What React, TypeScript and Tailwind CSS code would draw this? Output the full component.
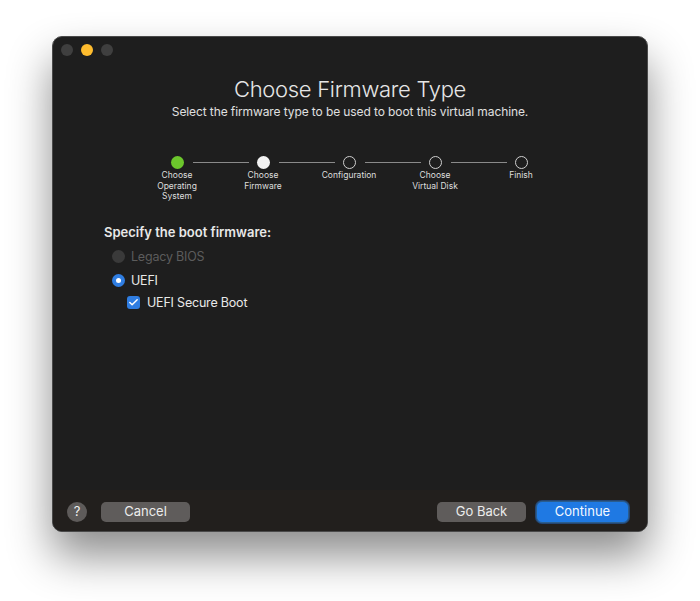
import { Check } from "lucide-react";

const steps = [
  { label: ["Choose", "Operating", "System"], state: "done" },
  { label: ["Choose", "Firmware"], state: "current" },
  { label: ["Configuration"], state: "todo" },
  { label: ["Choose", "Virtual Disk"], state: "todo" },
  { label: ["Finish"], state: "todo" },
];

function StepDot({ state }: { state: string }) {
  if (state === "done") return <div className="w-[13px] h-[13px] rounded-full bg-[#6cc62c]" />;
  if (state === "current") return <div className="w-[13px] h-[13px] rounded-full bg-[#f2f2f2]" />;
  return <div className="w-[13px] h-[13px] rounded-full border border-[#cfcfcf]" />;
}

export default function App() {
  return (
    <div className="w-[700px] h-[601px] bg-white pt-[36px] pl-[52px] font-['Inter',sans-serif]">
      {/* WINDOW */}
      <div className="w-[596px] h-[496px] rounded-[10px] bg-[#1e1e1e] flex flex-col overflow-hidden border border-[#4a4a4a] shadow-[0_24px_44px_rgba(0,0,0,0.45)]">
        {/* Traffic lights */}
        <div className="flex gap-[8px] pl-[8px] pt-[7px]">
          <div className="w-[12px] h-[12px] rounded-full bg-[#3f3f3f]" />
          <div className="w-[12px] h-[12px] rounded-full bg-[#febc2e]" />
          <div className="w-[12px] h-[12px] rounded-full bg-[#3f3f3f]" />
        </div>

        <div className="flex-1 flex flex-col">
          <h1 className="text-center text-[22px] leading-[28px] font-light text-[#e6e6e6] mt-[19px] tracking-[-0.3px]">
            Choose Firmware Type
          </h1>
          <p className="text-center text-[12px] leading-[16px] text-[#e0e0e0] mt-[1px] tracking-[-0.1px]">
            Select the firmware type to be used to boot this virtual machine.
          </p>

          {/* Steps */}
          <div className="flex justify-center mt-[36px] pr-[2px]">
            {steps.map((s, i) => (
              <div key={i} className="relative w-[86px] flex flex-col items-center">
                {i < steps.length - 1 && (
                  <div className="absolute top-[6px] left-[59px] w-[56px] h-px bg-[#8a8a8a]" />
                )}
                <StepDot state={s.state} />
                <div className="mt-[1px] text-center text-[8.5px] leading-[10.5px] text-[#dedede]">
                  {s.label.map((l) => (
                    <div key={l}>{l}</div>
                  ))}
                </div>
              </div>
            ))}
          </div>

          {/* Form */}
          <div className="pl-[51px] mt-[22px]">
            <div className="text-[13px] leading-[16px] font-semibold text-[#e8e8e8]">Specify the boot firmware:</div>
            <div className="mt-[9px] pl-[8px] flex items-center gap-[6px] text-[12.5px] leading-[16px] tracking-[-0.2px] text-[#5c5c5c]">
              <div className="w-[13px] h-[13px] rounded-full bg-[#3a3a3a]" />
              Legacy BIOS
            </div>
            <div className="mt-[8px] pl-[8px] flex items-center gap-[6px] text-[12.5px] leading-[16px] tracking-[-0.2px] text-[#e8e8e8]">
              <div className="w-[13px] h-[13px] rounded-full bg-[#2f7de1] flex items-center justify-center">
                <div className="w-[5px] h-[5px] rounded-full bg-white" />
              </div>
              UEFI
            </div>
            <div className="mt-[6px] pl-[23px] flex items-center gap-[7px] text-[12.5px] leading-[16px] tracking-[-0.2px] text-[#e8e8e8]">
              <div className="w-[13px] h-[13px] rounded-[3px] bg-[#2f7de1] flex items-center justify-center">
                <Check size={11} strokeWidth={3.2} className="text-white" />
              </div>
              UEFI Secure Boot
            </div>
          </div>
        </div>

        {/* FOOTER */}
        <div className="h-[41px] bg-[#221f1d] flex items-center pl-[14px] pr-[18px] pt-[2px]">
          <div className="w-[20px] h-[20px] rounded-full bg-[#5e5b5a] flex items-center justify-center text-[13px] leading-none text-[#f0f0f0]">
            ?
          </div>
          <button className="ml-[14px] w-[89px] h-[20px] rounded-[5px] bg-[#5f5c5b] text-[13px] leading-none text-[#ececec]">
            Cancel
          </button>
          <div className="flex-1" />
          <button className="w-[89px] h-[20px] rounded-[5px] bg-[#5f5c5b] text-[13px] leading-none text-[#ececec]">
            Go Back
          </button>
          <button className="ml-[10px] w-[93px] h-[22px] rounded-[6px] bg-[#1f79e3] border border-[#2a5d8e] text-[13px] leading-none text-[#f4f8ff] shadow-[0_0_0_1px_rgba(40,110,200,0.5)]">
            Continue
          </button>
        </div>
      </div>
    </div>
  );
}
